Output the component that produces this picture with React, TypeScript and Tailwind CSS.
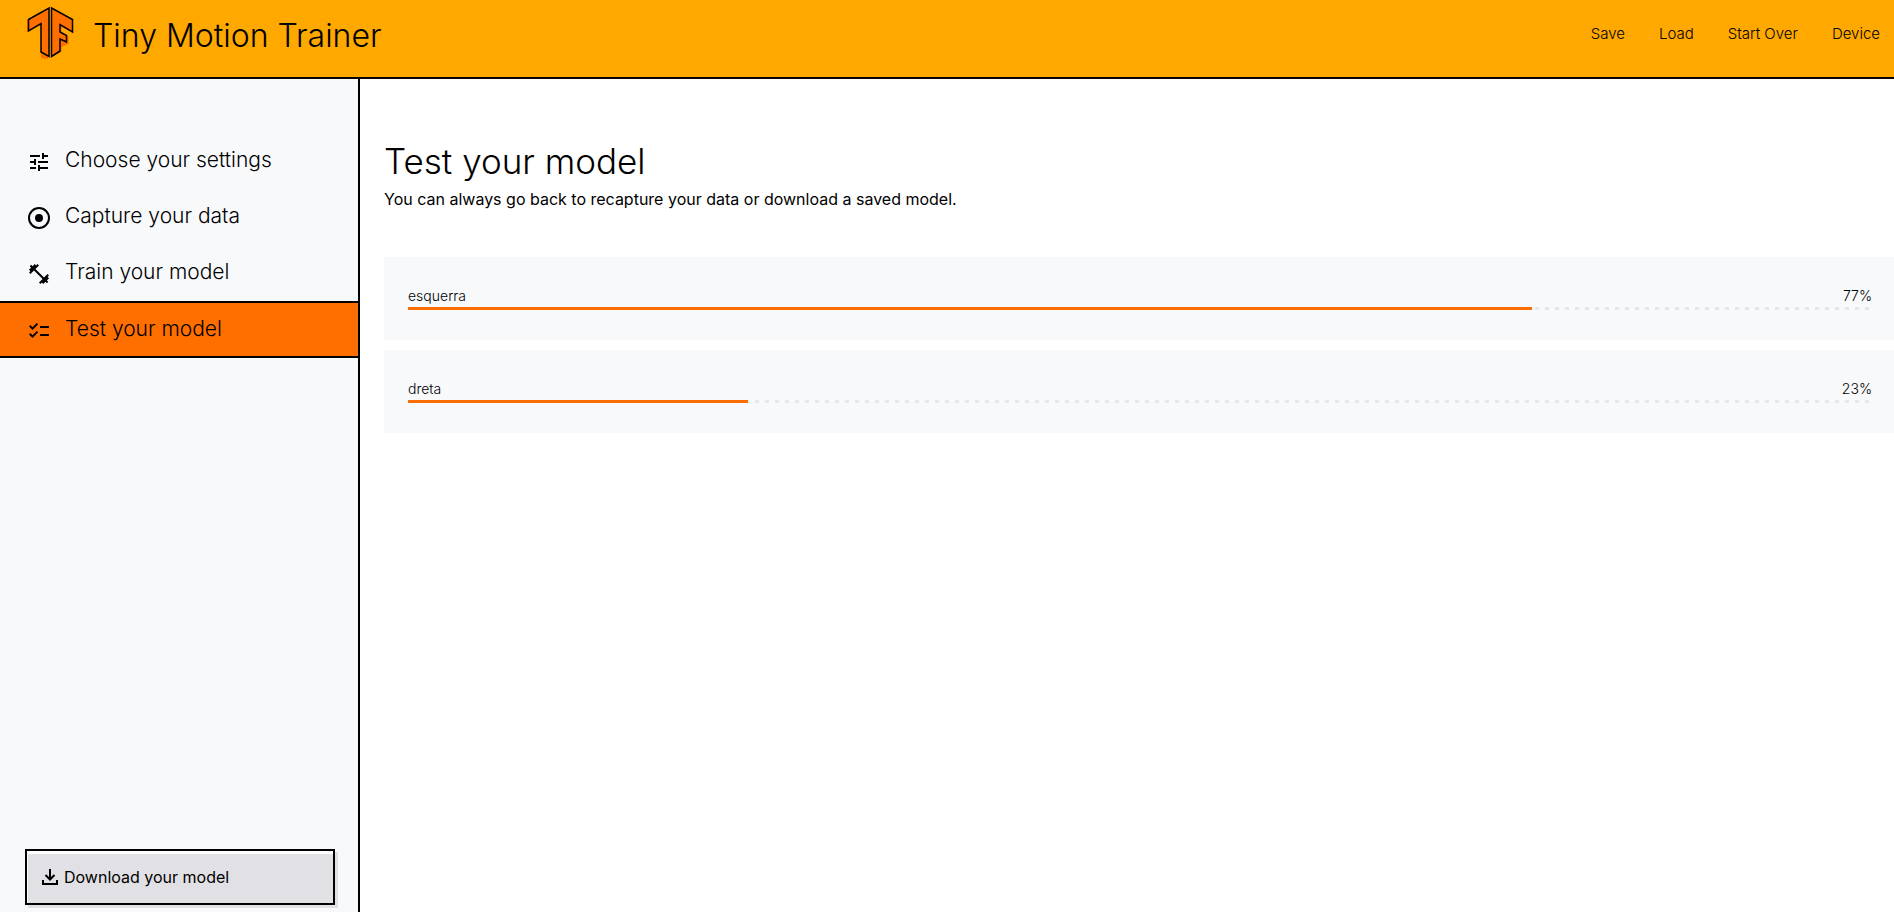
import React from "react";

const steps = [
  { label: "Choose your settings", icon: "M3 17v2h6v-2H3zM3 5v2h10V5H3zm10 16v-2h8v-2h-8v-2h-2v6h2zM7 9v2H3v2h4v2h2V9H7zm14 4v-2H11v2h10zm-6-4h2V7h4V5h-4V3h-2v6z" },
  { label: "Capture your data", icon: "M12 1a11 11 0 1 0 0 22 11 11 0 0 0 0-22zm0 20a9 9 0 1 1 0-18 9 9 0 0 1 0 18zM12 8a4 4 0 1 0 0 8 4 4 0 0 0 0-8z" },
  { label: "Train your model", icon: "M20.57 14.86L22 13.43 20.57 12 17 15.57 8.43 7 12 3.43 10.57 2 9.14 3.43 7.71 2 5.57 4.14 4.14 2.71 2.71 4.14l1.43 1.43L2 7.71l1.43 1.43L2 10.57 3.43 12 7 8.43 15.57 17 12 20.57 13.43 22l1.43-1.43L16.29 22l2.14-2.14 1.43 1.43 1.43-1.43-1.43-1.43L22 16.29z" },
  { label: "Test your model", icon: "M22 7h-9v2h9V7zm0 8h-9v2h9v-2zM5.54 11L2 7.46l1.41-1.41 2.12 2.12 4.24-4.24 1.41 1.41L5.54 11zm0 8L2 15.46l1.41-1.41 2.12 2.12 4.24-4.24 1.41 1.41L5.54 19z", active: true },
];

const results = [
  { label: "esquerra", value: 77, fill: 76.8 },
  { label: "dreta", value: 23, fill: 23.2 },
];

function Logo() {
  return (
    <svg viewBox="0 0 48 54" className="h-[54px] w-12 shrink-0" aria-hidden="true">
      <g fill="#ff6f00">
        <path d="M0 14L21 3v50l-7-1V19L0 26z" />
        <path d="M24 3l21 11l1.500 13l-12-6v6l7 3v8l-7 3v5l-10 5z" />
      </g>
      <g fill="#ff6f00" stroke="#000" strokeWidth="1.5">
        <path d="M1.500 13.500L22 2v48.500L14 46V17.500L1.500 25z" />
        <path d="M24.500 2L45.500 13.500V26L33 18.500V26l6.500 3.500V36l-6.500-3V45l-8.500 5.500z" />
      </g>
    </svg>
  );
}

function Result({ label, value, fill }: { label: string; value: number; fill: number }) {
  return (
    <li className="bg-[#f8f9fb] pt-[29px] pr-[22px] pb-[30px] pl-6">
      <div className="mb-px flex justify-between text-sm leading-5">
        <span>{label}</span>
        <span>{value}%</span>
      </div>
      <div className="h-[3px] bg-[repeating-linear-gradient(90deg,#e6e7e6_0_1px,transparent_1px_7px,#e6e7e6_7px_10px)]">
        <div className="h-full bg-[#ff6f00]" style={{ width: `${fill}%` }} />
      </div>
    </li>
  );
}

export default function App() {
  return (
    <div className="flex min-h-screen flex-col bg-white font-['Inter',sans-serif] font-light text-black">
      <header className="flex h-[79px] items-center justify-between border-b-2 border-black bg-[#ffa800] pr-[14px] pb-2 pl-[27px]">
        <div className="flex items-center gap-[18px]">
          <div className="pb-1">
            <Logo />
          </div>
          <h1 className="pt-0.5 text-[32px] leading-10">Tiny Motion Trainer</h1>
        </div>
        <nav className="flex gap-[34px] text-[15px]">
          <button>Save</button>
          <button>Load</button>
          <button>Start Over</button>
          <button>Device</button>
        </nav>
      </header>
      <div className="flex flex-1">
        <aside className="flex w-[360px] shrink-0 flex-col justify-between border-r-2 border-black bg-[#f8f9fb] pt-[54px] pb-[7px]">
          <nav>
            {steps.map((s) => (
              <a
                key={s.label}
                href="#"
                className={
                  s.active
                    ? "flex h-[57px] items-center gap-[14px] border-y-2 border-black bg-[#ff6f00] pl-[27px] text-[21px]"
                    : "flex h-14 items-center gap-[14px] pl-[27px] text-[21px]"
                }
              >
                <svg viewBox="0 0 24 24" className="mt-0.5 size-6 shrink-0" aria-hidden="true">
                  <path d={s.icon} />
                </svg>
                <span className="pb-0.5">{s.label}</span>
              </a>
            ))}
          </nav>
          <button className="mr-[23px] ml-[25px] flex h-14 items-center gap-1 border-2 border-black bg-[#e1e0e4] pl-[13px] text-base font-normal shadow-[inset_1px_3px_0_#fff,3px_3px_0_#e1e0e4]">
            <svg viewBox="0 0 20 20" className="size-5 shrink-0" fill="none" stroke="currentColor" strokeWidth="2" aria-hidden="true">
              <path d="M10 2v10M5.500 8l4.500 4.500L14.500 8M3 13v4h14v-4" />
            </svg>
            <span>Download your model</span>
          </button>
        </aside>
        <main className="min-w-0 flex-1 pt-[60px] pl-6">
          <h2 className="text-[35px] leading-[44px]">Test your model</h2>
          <p className="mt-1 text-base font-normal">You can always go back to recapture your data or download a saved model.</p>
          <ul className="mt-[46px] flex flex-col gap-[10px]">
            {results.map((r) => (
              <Result key={r.label} {...r} />
            ))}
          </ul>
        </main>
      </div>
    </div>
  );
}
